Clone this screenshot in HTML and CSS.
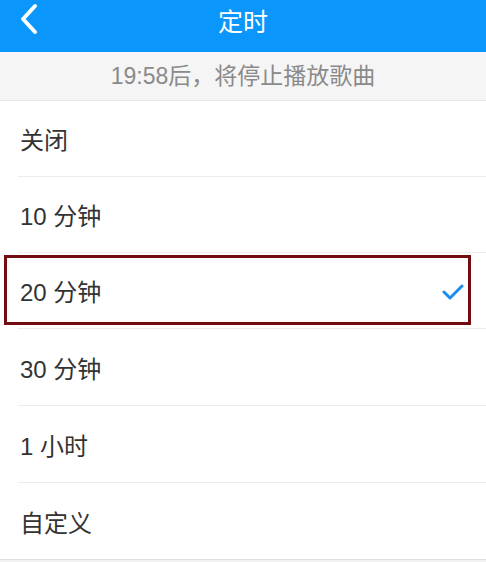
FILE: index.html
```html
<!DOCTYPE html>
<html lang="zh-CN">
<head>
    <meta charset="UTF-8">
    <meta name="viewport" content="width=device-width, initial-scale=1.0">
    <title>定时</title>
    <link rel="stylesheet" href="styles.css">
</head>
<body>
    <div class="nav-bar">
        <a class="back" href="#">
            <svg width="22" height="32" viewBox="0 0 22 32">
                <path d="M17 3 L5 16 L17 29" fill="none" stroke="#fff" stroke-width="4" stroke-linecap="round" stroke-linejoin="round"/>
            </svg>
        </a>
        <h1>定时</h1>
    </div>

    <div class="notice">19:58后，将停止播放歌曲</div>

    <ul class="timer-list">
        <li>关闭</li>
        <li>10 分钟</li>
        <li class="selected">
            <span>20 分钟</span>
            <svg class="check" width="22" height="18" viewBox="0 0 22 18">
                <path d="M2 9 L8 15 L20 3" fill="none" stroke="#1b8cf2" stroke-width="3" stroke-linecap="round" stroke-linejoin="round"/>
            </svg>
        </li>
        <li>30 分钟</li>
        <li>1 小时</li>
        <li class="last">自定义</li>
    </ul>
</body>
</html>
```

FILE: styles.css
```css
body {
    margin: 0;
    background: #f2f2f2;
    font-family: "Liberation Sans", "Noto Sans CJK SC", sans-serif;
}
.nav-bar {
    height: 40px;
    padding-bottom: 12px;
    background: #0a96fa;
    display: flex;
    align-items: center;
    justify-content: center;
    position: relative;
}
.nav-bar h1 {
    margin: 0;
    font-size: 25px;
    font-weight: normal;
    color: #fff;
}
.back {
    position: absolute;
    left: 18px;
    top: 3px;
}
.notice {
    height: 48px;
    line-height: 48px;
    background: #f5f5f5;
    border-bottom: 1px solid #e6e6e6;
    text-align: center;
    font-size: 23px;
    color: #8a8a8a;
}
.timer-list {
    list-style: none;
    margin: 0;
    padding: 0 0 0 18px;
    background: #fff;
    border-bottom: 1px solid #e0e0e0;
}
.timer-list li {
    height: 75px;
    border-bottom: 1px solid #ececec;
    display: flex;
    align-items: center;
    justify-content: space-between;
    padding: 0 22px 0 2px;
    font-size: 24px;
    color: #333;
}
.timer-list li:nth-child(4),
.timer-list li:nth-child(5) {
    height: 76px;
}
.timer-list li.last {
    height: 76px;
    border-bottom: none;
}
.timer-list li.selected {
    position: relative;
}
.timer-list li.selected::after {
    content: "";
    position: absolute;
    left: -14px;
    right: 15px;
    top: 2px;
    bottom: 3px;
    border: 3px solid #720d12;
}
.check {
    margin-top: 2px;
}
```
